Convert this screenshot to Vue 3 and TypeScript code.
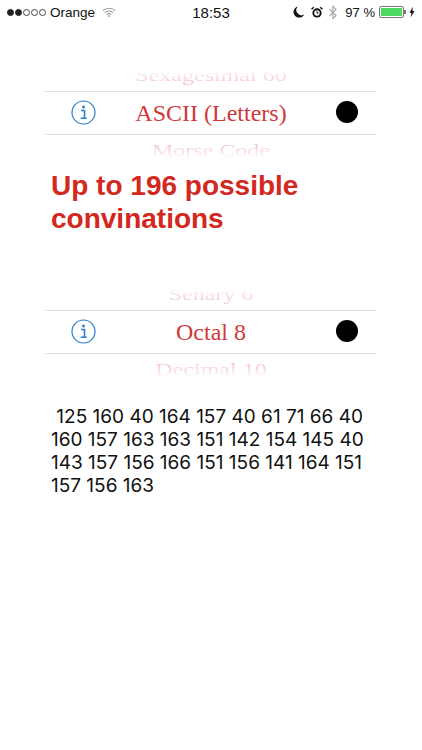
<script setup lang="ts">
const code = ' 125 160 40 164 157 40 61 71 66 40 160 157 163 163 151 142 154 145 40 143 157 156 166 151 156 141 164 151 157 156 163'
const first = { top: 'Sexagesimal 60', mid: 'ASCII (Letters)', bottom: 'Morse Code' }
const second = { top: 'Senary 6', mid: 'Octal 8', bottom: 'Decimal 10' }
</script>

<template>
  <div class="page">
    <header class="status">
      <div class="left">
        <span class="dots">
          <i class="dot on"></i><i class="dot on"></i><i class="dot"></i><i class="dot"></i><i class="dot"></i>
        </span>
        <span class="carrier">Orange</span>
        <svg class="wifi" width="14" height="11" viewBox="0 0 15 11">
          <path d="M1 3.6a9.2 9.2 0 0 1 13 0M3 5.800a6.400 6.400 0 0 1 9 0M5 7.900a3.600 3.600 0 0 1 5 0" fill="none" stroke="#9a9a9a" stroke-width="1.100"/>
          <path d="M7.500 10.600 6 9.100a2.100 2.100 0 0 1 3 0z" fill="#9a9a9a"/>
        </svg>
      </div>
      <div class="time">18:53</div>
      <div class="right">
        <svg class="moon" width="12" height="12" viewBox="0 0 11 12"><path d="M4.200.6a5.600 5.600 0 1 0 6.400 8A5.200 5.200 0 0 1 4.200.6z" fill="#111"/></svg>
        <svg class="alarm" width="12" height="13" viewBox="0 0 13 13">
          <circle cx="6.500" cy="7" r="5" fill="#111"/>
          <circle cx="6.500" cy="7" r="3" fill="#fff"/>
          <path d="M6.500 4.800V7.200H8.400" fill="none" stroke="#111" stroke-width="1"/>
          <path d="M.6 3 3 .8M12.400 3 10 .8" stroke="#111" stroke-width="1.600"/>
        </svg>
        <svg class="bt" width="10" height="15" viewBox="0 0 9 15"><path d="M1 4l6.500 6.500L4.400 13.600V1.400L7.500 4.500 1 11" fill="none" stroke="#a8a8a8" stroke-width="1.100"/></svg>
        <span class="pct">97 %</span>
        <span class="battery"><span class="fill"></span></span>
        <svg class="bolt" width="6" height="12" viewBox="0 0 7 12"><path d="M4.500 0 .5 7h2.400L2 12l4.500-7.200H4z" fill="#111"/></svg>
      </div>
    </header>

    <section class="picker first">
      <div class="ghost ghost-top"><span>{{ first.top }}</span></div>
      <div class="selected">
        <svg class="info" width="25" height="25" viewBox="0 0 25 25">
          <circle cx="12.500" cy="12.500" r="11.500" fill="none" stroke="#2b7fc9" stroke-width="1.200"/>
          <circle cx="12.500" cy="7" r="1.500" fill="#2b7fc9"/>
          <path d="M10 10.500h3.500v7.500H15.500M9.700 18.300h5.800" fill="none" stroke="#2b7fc9" stroke-width="1.600"/>
        </svg>
        <span class="label">{{ first.mid }}</span>
        <span class="knob"></span>
      </div>
      <div class="ghost ghost-bottom"><span>{{ first.bottom }}</span></div>
    </section>

    <h1 class="title">Up to 196 possible convinations</h1>

    <section class="picker second">
      <div class="ghost ghost-top"><span>{{ second.top }}</span></div>
      <div class="selected">
        <svg class="info" width="25" height="25" viewBox="0 0 25 25">
          <circle cx="12.500" cy="12.500" r="11.500" fill="none" stroke="#2b7fc9" stroke-width="1.200"/>
          <circle cx="12.500" cy="7" r="1.500" fill="#2b7fc9"/>
          <path d="M10 10.500h3.500v7.500H15.500M9.700 18.300h5.800" fill="none" stroke="#2b7fc9" stroke-width="1.600"/>
        </svg>
        <span class="label">{{ second.mid }}</span>
        <span class="knob"></span>
      </div>
      <div class="ghost ghost-bottom"><span>{{ second.bottom }}</span></div>
    </section>

    <p class="code">{{ code }}</p>
  </div>
</template>

<style>
html, body { margin: 0; background: #fff; }
</style>

<style scoped>
.page {
  width: 422px;
  height: 750px;
  overflow: hidden;
  background: #fff;
  font-family: "Liberation Sans", Arial, sans-serif;
  color: #111;
}
.status {
  height: 24px;
  display: grid;
  grid-template-columns: 1fr auto 1fr;
  align-items: center;
  padding: 0 7px;
  font-size: 13.500px;
}
.left, .right { display: flex; align-items: center; }
.right { justify-content: flex-end; }
.dots { display: flex; gap: 1px; margin-right: 4px; }
.dot { width: 7px; height: 7px; border: 0.8px solid #444; border-radius: 50%; box-sizing: border-box; }
.dot.on { background: #222; border-color: #222; }
.wifi { margin-left: 7px; }
.time { font-size: 15px; }
.alarm { margin-left: 6px; }
.bt { margin-left: 5px; }
.pct { margin-left: 7px; font-size: 13px; }
.battery {
  position: relative;
  width: 25px; height: 12px; border: 1px solid #777; border-radius: 2px;
  padding: 1px; box-sizing: border-box; display: block; margin-left: 4px;
}
.battery::after {
  content: "";
  position: absolute;
  right: -3px;
  top: 3px;
  width: 2px;
  height: 4px;
  background: #777;
}
.fill { display: block; width: 100%; height: 100%; background: #4cd964; }
.bolt { margin-left: 5px; }
.picker {
  width: 332px;
  margin-left: 45px;
  font-family: "Liberation Serif", "Times New Roman", serif;
}
.first { margin-top: 46px; }
.second { margin-top: 54px; }
.selected {
  position: relative;
  height: 42px;
  border-top: 1px solid #e2e2e2;
  border-bottom: 1px solid #e2e2e2;
  display: flex;
  align-items: center;
  justify-content: space-between;
  padding: 0 19px 0 26px;
}
.info { margin-bottom: 1px; }
.label {
  position: absolute;
  left: 0; right: 0;
  text-align: center;
  font-size: 24px;
  color: #d0383c;
}
.knob { width: 22px; height: 22px; background: #000; border-radius: 50%; margin-bottom: 3px; }
.ghost {
  height: 21px;
  overflow: hidden;
  display: flex;
  justify-content: center;
  font-size: 24px;
  color: #f3b4ba;
  line-height: 24px;
}
.ghost span { display: block; transform: scaleY(0.72); }
.ghost-top {
  align-items: flex-end;
  padding-bottom: 4px;
  height: 17px;
  -webkit-mask-image: linear-gradient(to bottom, transparent 0, #000 80%);
  mask-image: linear-gradient(to bottom, transparent 0, #000 80%);
}
.ghost-bottom {
  height: 24px;
  align-items: flex-start;
  padding-top: 3px;
  box-sizing: border-box;
  -webkit-mask-image: linear-gradient(to top, transparent 0, #000 80%);
  mask-image: linear-gradient(to top, transparent 0, #000 80%);
}
.title {
  margin: 10px 0 0 51px;
  width: 300px;
  font-size: 28px;
  line-height: 33px;
  font-weight: 700;
  color: #d2281e;
}
.code {
  margin: 27px 0 0 51px;
  width: 320px;
  font-family: Inter, "Liberation Sans", sans-serif;
  font-size: 19px;
  line-height: 23px;
  color: #111;
  white-space: pre-wrap;
}
</style>
